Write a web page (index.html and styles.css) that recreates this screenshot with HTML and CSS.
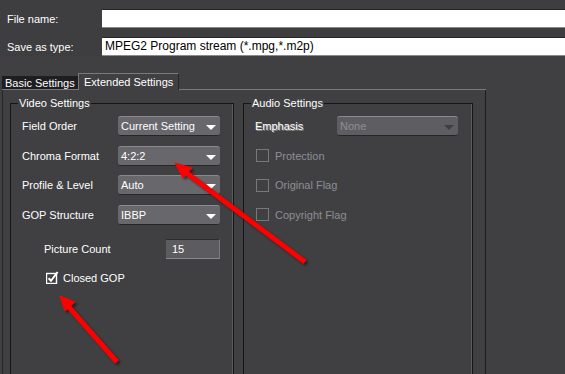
FILE: index.html
```html
<!DOCTYPE html>
<html lang="en">
<head>
    <meta charset="UTF-8">
    <title>Export Settings</title>
    <link rel="stylesheet" href="styles.css">
</head>
<body>
    <div class="window">
        <div class="file-rows">
            <div class="field-row">
                <span class="field-label">File name:</span>
                <div class="text-field"></div>
            </div>
            <div class="field-row">
                <span class="field-label">Save as type:</span>
                <div class="text-field">MPEG2 Program stream (*.mpg,*.m2p)</div>
            </div>
        </div>

        <div class="tabs">
            <div class="tab">Basic Settings</div>
            <div class="tab active">Extended Settings</div>
            <div class="tab-fill"></div>
        </div>

        <div class="panel">
            <fieldset class="group video">
                <legend>Video Settings</legend>
                <div class="rows">
                    <div class="row">
                        <span class="row-label">Field Order</span>
                        <div class="select">Current Setting<span class="caret"></span></div>
                    </div>
                    <div class="row">
                        <span class="row-label">Chroma Format</span>
                        <div class="select">4:2:2<span class="caret"></span></div>
                    </div>
                    <div class="row">
                        <span class="row-label">Profile &amp; Level</span>
                        <div class="select">Auto<span class="caret"></span></div>
                    </div>
                    <div class="row">
                        <span class="row-label">GOP Structure</span>
                        <div class="select">IBBP<span class="caret"></span></div>
                    </div>
                </div>
                <div class="count-row">
                    <span class="count-label">Picture Count</span>
                    <div class="number-field">15</div>
                </div>
                <div class="check-row">
                    <span class="checkbox checked">
                        <svg width="13" height="13" viewBox="0 0 13 13">
                            <rect x="0.5" y="2.5" width="10" height="10" fill="none" stroke="#fff" stroke-width="1.4"/>
                            <path d="M2.6 7.2 L5 9.8 L11.6 1" fill="none" stroke="#fff" stroke-width="2"/>
                        </svg>
                    </span>
                    <span>Closed GOP</span>
                </div>
            </fieldset>

            <fieldset class="group audio">
                <legend>Audio Settings</legend>
                <div class="rows">
                    <div class="row">
                        <span class="row-label emboss">Emphasis</span>
                        <div class="select disabled">None<span class="caret"></span></div>
                    </div>
                    <div class="row">
                        <span class="checkbox"></span>
                        <span class="dim">Protection</span>
                    </div>
                    <div class="row">
                        <span class="checkbox"></span>
                        <span class="dim">Original Flag</span>
                    </div>
                    <div class="row">
                        <span class="checkbox"></span>
                        <span class="dim">Copyright Flag</span>
                    </div>
                </div>
            </fieldset>
        </div>

        <!-- red annotation arrows drawn on top of the dialog -->
        <svg class="marks" width="565" height="374" viewBox="0 0 565 374">
            <g fill="#ff0000" stroke="#ff0000">
                <line x1="305" y1="262" x2="184" y2="171" stroke-width="5"/>
                <polygon points="175,163 192,168 183,178" stroke-width="1"/>
                <line x1="117" y1="362" x2="67" y2="305" stroke-width="5"/>
                <polygon points="60,296 75,302 65,311" stroke-width="1"/>
            </g>
        </svg>
    </div>
</body>
</html>
```
FILE: styles.css
```css
html, body {
    margin: 0;
    padding: 0;
}

body {
    background: #404042;
    color: #fff;
    font-family: "Liberation Sans", Arial, sans-serif;
    font-size: 11px;
    white-space: nowrap;
}

.window {
    position: relative;
    width: 565px;
    height: 374px;
    overflow: hidden;
}

/* file name rows */
.file-rows {
    padding-top: 9px;
    background: #3e3e40;
}

.field-row {
    display: flex;
    align-items: center;
    height: 19px;
    margin-bottom: 9px;
}

.field-row:last-child {
    margin-bottom: 0;
}

.field-label {
    width: 102px;
    padding-left: 7px;
    box-sizing: border-box;
}

.text-field {
    flex: 1;
    height: 17px;
    line-height: 17px;
    padding-left: 3px;
    background: #fff;
    color: #000;
    border-top: 1px solid #262628;
    border-bottom: 1px solid #8a8a8a;
    font-size: 12px;
}

/* tab strip */
.tabs {
    display: flex;
    align-items: flex-end;
    width: 486px;
    height: 17px;
    margin-top: 17px;
}

.tab {
    height: 14px;
    line-height: 14px;
    margin-left: 2px;
    width: 76px;
    padding-left: 3px;
    box-sizing: border-box;
    background: #1e1e20;
    border-bottom: 1px solid #7a7a7a;
}

.tab.active {
    margin-left: 0;
    width: 101px;
    height: 17px;
    line-height: 16px;
    padding-left: 5px;
    background: #404042;
    border-top: 1px solid #7a7a7a;
    border-left: 1px solid #7a7a7a;
    border-right: 1px solid #262628;
    border-bottom: none;
}

.tab-fill {
    flex: 1;
    border-bottom: 1px solid #7a7a7a;
}

/* settings panel */
.panel {
    display: flex;
    gap: 9px;
    width: 484px;
    height: 290px;
    margin-left: 2px;
    padding: 7px 0 0 7px;
    box-sizing: border-box;
    border-left: 1px solid #262628;
    border-right: 1px solid #1e1e20;
}

.group {
    margin: 0;
    padding: 6px 11px 0 11px;
    min-width: 0;
    height: 300px;
    box-sizing: border-box;
    border: 1px solid #151517;
    box-shadow: inset -1px 0 0 #5c5c5e;
}

.group legend {
    margin-left: -4px;
    padding: 0 1px;
    line-height: 13px;
}

.video {
    width: 224px;
}

.audio {
    width: 230px;
}

.rows {
    display: flex;
    flex-direction: column;
    gap: 9.5px;
}

.row {
    display: flex;
    align-items: center;
    height: 20px;
}

.row-label {
    width: 96px;
}

.audio .row-label {
    width: 82px;
}

.emboss {
    text-shadow: 1px 1px 0 #8a8a8a;
}

.select {
    position: relative;
    width: 102px;
    height: 20px;
    line-height: 19px;
    padding-left: 3px;
    box-sizing: border-box;
    background: #68686c;
    border-top: 1px solid #8a8a8e;
    border-bottom: 1px solid #26262a;
    border-radius: 3px;
}

.select.disabled {
    width: 121px;
    background: #5e5e62;
    color: #8e8e92;
}

.caret {
    position: absolute;
    right: 4px;
    top: 8px;
    width: 0;
    height: 0;
    border-left: 5px solid transparent;
    border-right: 5px solid transparent;
    border-top: 5px solid #fff;
}

.select.disabled .caret {
    border-top-color: #3e3e42;
}

.count-row {
    display: flex;
    align-items: center;
    margin-top: 14px;
    padding-left: 22px;
    height: 20px;
}

.count-label {
    width: 122px;
}

.number-field {
    width: 54px;
    height: 20px;
    line-height: 19px;
    padding-left: 6px;
    box-sizing: border-box;
    background: #5c5c60;
    border-top: 1px solid #2c2c2e;
    border-bottom: 1px solid #8a8a8e;
    border-right: 1px solid #7a7a7e;
}

.check-row {
    display: flex;
    align-items: center;
    gap: 4px;
    margin-top: 11px;
    padding-left: 24px;
    height: 16px;
}

.checkbox {
    display: inline-block;
    width: 11px;
    height: 11px;
    margin: 0 6px 0 1px;
    border: 1px solid #78787c;
}

.checkbox.checked {
    width: 13px;
    height: 13px;
    margin: 0;
    border: none;
}

.dim {
    color: #8e8e92;
}

.marks {
    position: absolute;
    left: 0;
    top: 0;
    filter: drop-shadow(2px 2px 1px rgba(0, 0, 0, 0.45));
}
```
